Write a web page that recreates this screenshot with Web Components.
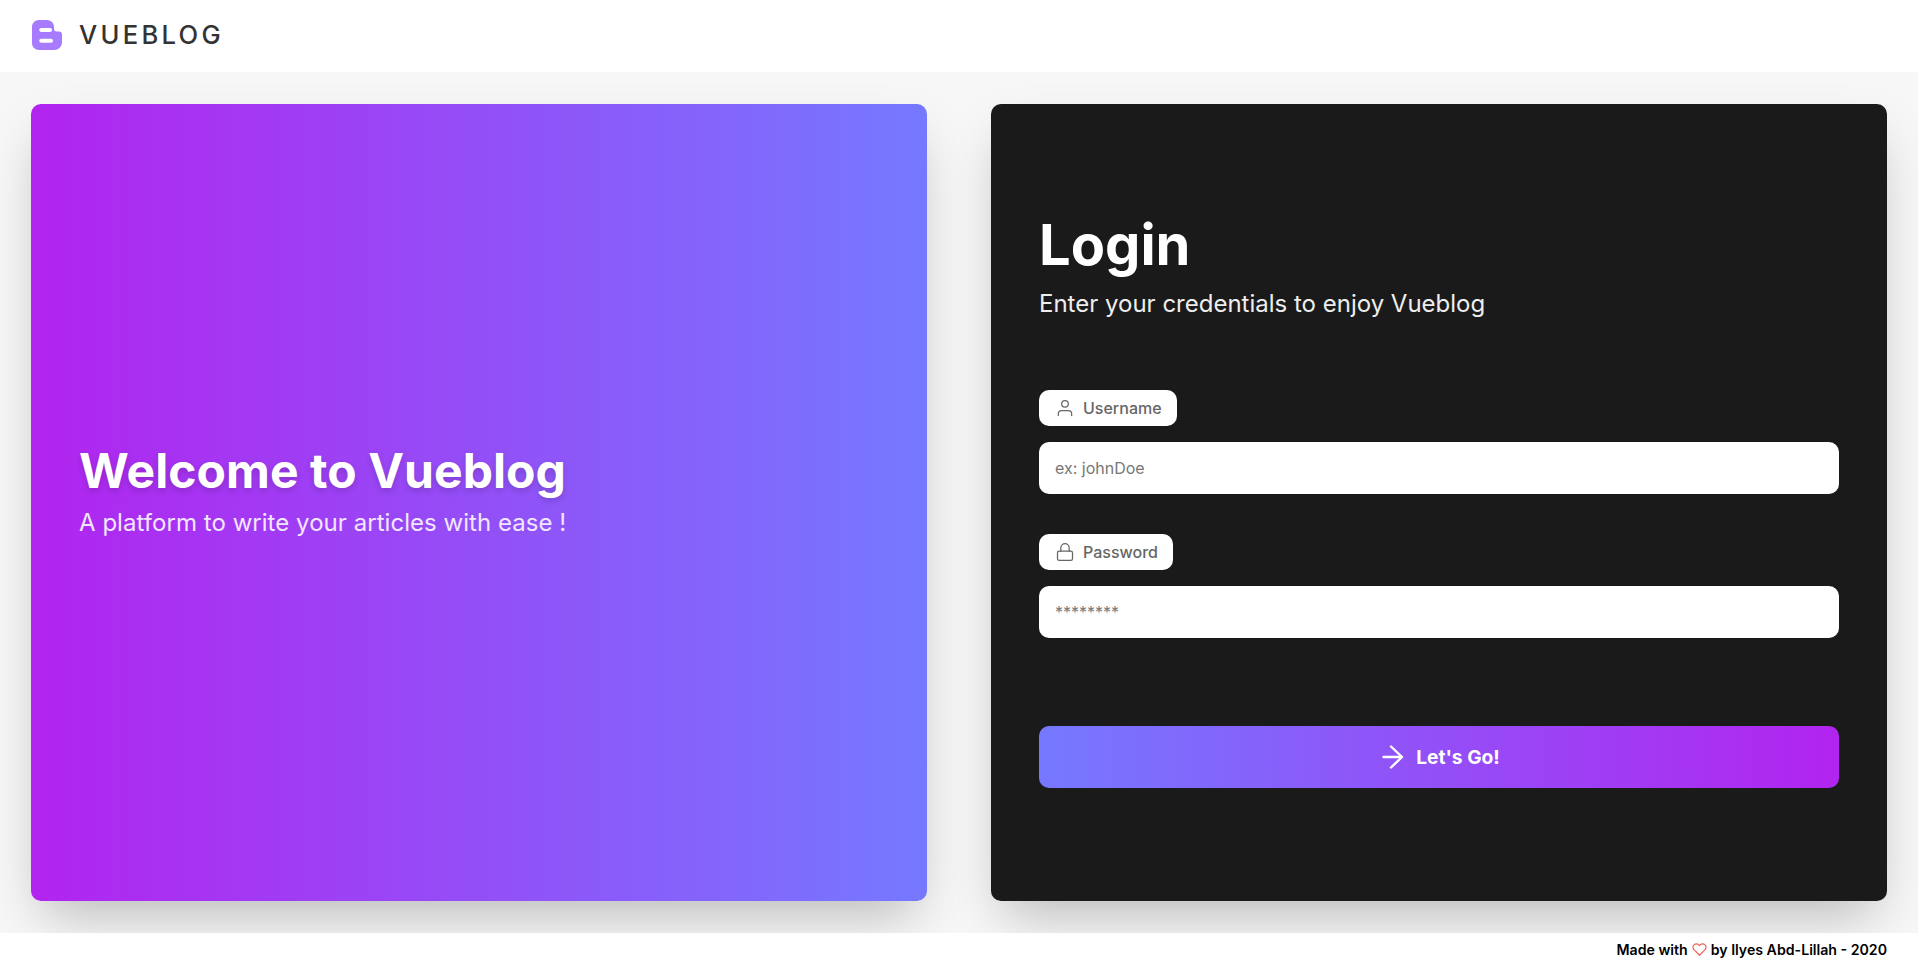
<!DOCTYPE html>
<html lang="en"><head><meta charset="utf-8"><title>Vueblog</title>
<style>
html,body{margin:0;padding:0;height:100%}
body{font-family:Inter,"Liberation Sans",sans-serif;background:#f7f7f7;overflow:hidden}
vb-app{height:968px}
</style></head><body>
<vb-app></vb-app>
<script>
const def=(name,html,setup)=>customElements.define(name,class extends HTMLElement{
  constructor(){super();this.attachShadow({mode:'open'}).innerHTML=html;}
  connectedCallback(){setup&&setup(this)}
});
def('vb-header',`<style>
:host{display:flex;align-items:center;height:72px;flex:none;background:#fff;padding:0 32px;box-sizing:border-box;position:relative;z-index:2}
svg{display:block;width:30px;height:30px;flex:none;margin-right:17px;margin-top:-2px}
span{font-size:25.6px;font-weight:500;letter-spacing:3.3px;color:#333;line-height:1;margin-top:-3px}
</style>
<svg viewBox="0 0 30 30"><path fill="#a67bff" fill-rule="evenodd" d="M7 0H15C19 0 22 3 22 7V9C22 10.500 23 11.500 24.500 11.500H27C28.800 11.500 30 12.800 30 14.500V22C30 26.500 26.500 30 22 30H7C3 30 0 27 0 23V7C0 3 3 0 7 0ZM9.300 8H18C19.100 8 20 8.900 20 10S19.100 12 18 12H9.300C8.200 12 7.300 11.100 7.300 10S8.200 8 9.300 8ZM9.300 18.700H19C20.100 18.700 21 19.600 21 20.700S20.100 22.700 19 22.700H9.300C8.200 22.700 7.300 21.800 7.300 20.700S8.200 18.700 9.300 18.700Z"/></svg>
<span>VUEBLOG</span>`);
def('vb-welcome',`<style>
:host{display:flex;flex-direction:column;justify-content:center;box-sizing:border-box;padding:0 48px 23px;border-radius:10px;color:#fff;background:linear-gradient(90deg,#b224ef,#7579ff);box-shadow:0 25px 50px -12px rgba(0,0,0,.25)}
h1{margin:0;font-size:48px;line-height:56px;font-weight:700;letter-spacing:.07px;text-shadow:0 3px 6px rgba(0,0,0,.16)}
p{margin:8px 0 0;font-size:24px;line-height:32px;font-weight:400;letter-spacing:.04px;color:#f1e6ff}
</style><h1>Welcome to Vueblog</h1><p>A platform to write your articles with ease !</p>`);
def('vb-field',`<style>
:host{display:block}
.tag{display:inline-flex;vertical-align:top;align-items:center;height:36px;box-sizing:border-box;padding:0 15.500px 0 16px;background:#fff;border-radius:10px;font-size:16px;font-weight:550;color:#666;gap:8px}
svg{width:20px;height:20px;fill:none;stroke:#666;stroke-width:1.500;stroke-linecap:round;stroke-linejoin:round;flex:none}
input{display:block;width:100%;box-sizing:border-box;height:52px;margin-top:16px;border:0;outline:0;border-radius:10px;background:#fff;padding:0 16px;font:400 16px Inter,"Liberation Sans",sans-serif;color:#333}
input::placeholder{color:#777;opacity:1}
</style><div class="tag"><span id="l"></span></div><input id="i">`,h=>{
  const r=h.shadowRoot;r.getElementById('l').textContent=h.getAttribute('label');
  const i=r.getElementById('i');i.placeholder=h.getAttribute('placeholder');i.type='text';
  r.querySelector('.tag').insertAdjacentHTML('afterbegin',h.getAttribute('label')==='Username'
   ?'<svg viewBox="0 0 24 24"><path d="M20 21v-2a4 4 0 0 0-4-4H8a4 4 0 0 0-4 4v2"/><circle cx="12" cy="7" r="4"/></svg>'
   :'<svg viewBox="0 0 24 24"><rect x="3" y="11" width="18" height="11" rx="2" ry="2"/><path d="M7 11V7a5 5 0 0 1 10 0v4"/></svg>');
});
def('vb-login',`<style>
:host{display:block;box-sizing:border-box;padding:113px 48px 0;border-radius:10px;background:#1a1a1a;color:#fff;box-shadow:0 25px 50px -12px rgba(0,0,0,.25)}
h1{margin:0;font-size:56px;line-height:56px;font-weight:700}
p{margin:15px 0 0;font-size:24px;line-height:32px;color:#eee}
vb-field{margin-top:40px}
vb-field.first{margin-top:70px}
button{display:flex;align-items:center;justify-content:center;gap:12px;width:100%;height:62px;margin-top:88px;border:0;border-radius:10px;color:#fff;background:linear-gradient(90deg,#7579ff,#b224ef);font:700 19.200px Inter,"Liberation Sans",sans-serif;padding:0 0 0 2px}
svg{width:24px;height:24px;fill:none;stroke:#fff;stroke-width:2.400;stroke-linecap:round;stroke-linejoin:round}
</style><h1>Login</h1><p>Enter your credentials to enjoy Vueblog</p>
<vb-field class="first" label="Username" placeholder="ex: johnDoe"></vb-field>
<vb-field label="Password" placeholder="********"></vb-field>
<button><svg viewBox="0 0 24 24"><path d="M3.500 12H22M11 1.500L22 12 11 22.500"/></svg>Let's Go!</button>`);
def('vb-footer',`<style>
:host{display:flex;align-items:center;justify-content:flex-end;height:35px;flex:none;background:#fff;padding:0 31px 2px;font-size:14.150px;font-weight:600;color:#000;position:relative;z-index:2;box-sizing:border-box;gap:4px}
svg{width:15px;height:15px;fill:none;stroke:#f0645a;stroke-width:2;stroke-linecap:round;stroke-linejoin:round}
</style><span>Made with</span><svg viewBox="0 0 24 24"><path d="M20.840 4.610a5.500 5.500 0 0 0-7.780 0L12 5.670l-1.060-1.060a5.500 5.500 0 0 0-7.780 7.780l1.060 1.060L12 21.230l7.780-7.780 1.060-1.060a5.500 5.500 0 0 0 0-7.780z"/></svg><span>by Ilyes Abd-Lillah - 2020</span>`);
def('vb-app',`<style>
:host{display:flex;flex-direction:column;height:968px}
main{flex:1;display:grid;grid-template-columns:1fr 1fr;gap:64px;padding:32px 31px;min-height:0}
</style><vb-header></vb-header><main><vb-welcome></vb-welcome><vb-login></vb-login></main><vb-footer></vb-footer>`);
</script></body></html>
